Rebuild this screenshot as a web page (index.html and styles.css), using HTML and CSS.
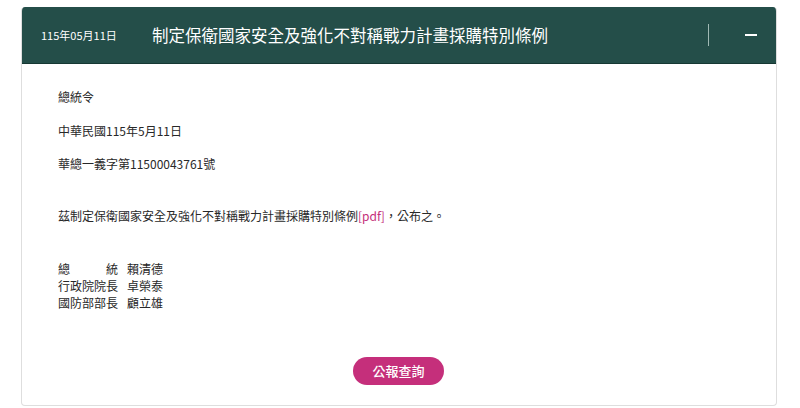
FILE: index.html
```html
<html>
<head>
<meta charset="utf-8">
<title>總統令</title>
<link rel="stylesheet" href="styles.css">
</head>
<body>

<div class='card'>
  <div class='head'>
    <span class='date'>115年05月11日</span>
    <h1>制定保衛國家安全及強化不對稱戰力計畫採購特別條例</h1>
    <div class='tools'>
      <span class='divider'></span>
      <span class='minus'></span>
    </div>
  </div>
  <div class='content'>
    <p>總統令</p>
    <p>中華民國115年5月11日</p>
    <p>華總一義字第11500043761號</p>
    <p class='main'>茲制定保衛國家安全及強化不對稱戰力計畫採購特別條例<a href='#'>[pdf]</a>，公布之。</p>
    <div class='sign'>
      <div class='row'><span class='title'>總　　　統</span><span>賴清德</span></div>
      <div class='row'><span class='title'>行政院院長</span><span>卓榮泰</span></div>
      <div class='row'><span class='title'>國防部部長</span><span>顧立雄</span></div>
    </div>
    <div class='actions'>
      <a class='button' href='#'>公報查詢</a>
    </div>
  </div>
</div>

</body>
</html>
```

FILE: styles.css
```css
body{
  margin:0px;
  padding:7px 23px 0px 21px;
  font-family:"Noto Sans CJK TC", "Noto Sans", sans-serif;
  background:#fff;
}

.card{
  border:1px solid rgb(222,222,222);
  border-top:none;
  border-radius:4px;
  overflow:hidden;
}

.head{
  display:flex;
  align-items:center;
  height:56px;
  padding:0px 0px 0px 19px;
  background:rgb(36,78,73);
  border-bottom:1px solid rgb(22,56,51);
  color:#fff;
}
.head .date{
  width:111px;
  font-size:11px;
}
.head h1{
  flex:1;
  margin:0px;
  font-size:16.5px;
  font-weight:400;
}
.head .tools{
  display:flex;
  align-items:center;
}
.head .divider{
  display:block;
  width:1px;
  height:22px;
  background:rgb(160,185,180);
  margin-right:36px;
}
.head .minus{
  display:block;
  width:12px;
  height:2px;
  background:#fff;
  margin-right:19px;
}

.content{
  padding:24px 37px 20px 36px;
  font-size:12px;
  color:rgb(40,40,40);
}
.content p{
  margin:0px 0px 16.5px 0px;
  line-height:17px;
}
.content p.main{
  margin-top:34.5px;
}
.content a{
  color:rgb(197,47,123);
  text-decoration:none;
}

.sign{
  margin-top:36px;
  line-height:17px;
}
.sign .row{
  display:flex;
}
.sign .title{
  width:69px;
}

.actions{
  display:flex;
  justify-content:center;
  margin-top:46px;
}
.actions .button{
  display:block;
  width:91px;
  height:28px;
  line-height:28px;
  text-align:center;
  border-radius:14px;
  background:rgb(197,47,123);
  color:#fff;
  font-size:13px;
  font-weight:500;
}
```
